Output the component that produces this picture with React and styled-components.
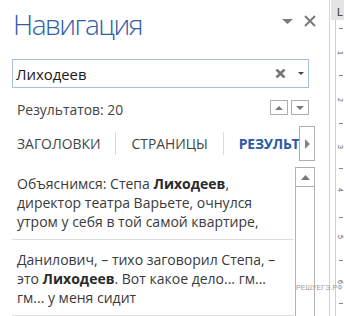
import React from "react";
import styled, { createGlobalStyle } from "styled-components";

const Global = createGlobalStyle`
  html, body { margin: 0; padding: 0; background: #ffffff; }
  body { width: 344px; height: 316px; overflow: hidden; font-family: "Open Sans", "Noto Sans", sans-serif; }
  #root { width: 344px; height: 316px; }
`;

const Page = styled.div`
  position: relative;
  display: flex;
  width: 344px;
  height: 316px;
  overflow: hidden;
  background: #fff;
`;

const Panel = styled.div`
  width: 317px;
  padding-left: 12px;
  height: 316px;
  border-right: 1px solid #d4d4d4;
  display: flex;
  flex-direction: column;
  overflow: hidden;
`;

const Header = styled.div`
  height: 55px;
  padding-top: 4px;
  width: 304px;
  display: flex;
  justify-content: space-between;
  align-items: flex-start;
`;

const Title = styled.h1`
  margin: 0 0 0 1px;
  font-family: "Open Sans", sans-serif;
  font-weight: 300;
  font-size: 28px;
  letter-spacing: -1.5px;
  line-height: 41px;
  color: #2e5ea8;
`;

const HeaderButtons = styled.div`
  display: flex;
  align-items: center;
  gap: 11px;
  margin-top: 11px;
`;

const SearchBox = styled.div`
  height: 27px;
  border: 1px solid #a6bde2;
  display: flex;
  align-items: center;
  padding: 0 4px 0 3px;
  box-sizing: content-box;
  width: 288px;
`;

const SearchText = styled.span`
  flex: 1;
  font-size: 14.9px;
  color: #1a1a1a;
`;

const ClearIcon = styled.svg`
  margin-right: 12px;
`;

const ResultsRow = styled.div`
  height: 25px;
  margin-top: 8px;
  width: 297px;
  display: flex;
  align-items: center;
  justify-content: space-between;
`;

const Count = styled.span`
  margin-left: 5px;
  font-size: 13.9px;
  color: #444;
  padding-top: 2px;
`;

const NavButtons = styled.div`
  display: flex;
  gap: 3px;
  margin-top: -2px;
`;

const NavBtn = styled.div`
  width: 16px;
  height: 13px;
  border: 1px solid #adadad;
  display: flex;
  align-items: center;
  justify-content: center;
  background: #fff;
`;

const TabsRow = styled.div`
  margin-top: 5px;
  height: 35px;
  width: 303px;
  display: flex;
  align-items: stretch;
`;

const TabStrip = styled.div`
  flex: 1;
  display: flex;
  align-items: center;
  overflow: hidden;
  white-space: nowrap;
`;

const Tab = styled.div`
  flex: none;
  padding-left: ${(p) => (p.$first ? "5px" : "15px")};
  padding-right: 15px;
  font-size: 13.9px;
  font-weight: ${(p) => (p.$active ? 700 : 400)};
  color: ${(p) => (p.$active ? "#2b5aa5" : "#454545")};
  letter-spacing: ${(p) => (p.$active ? "-0.2px" : "0")};
`;

const Sep = styled.div`
  flex: none;
  width: 1px;
  height: 23px;
  background: #dcdcdc;
`;

const TabScroll = styled.div`
  flex: none;
  width: 14px;
  border: 1px solid #adadad;
  display: flex;
  align-items: center;
  justify-content: center;
  background: #fff;
`;

const ResultsArea = styled.div`
  flex: 1;
  display: flex;
  width: 303px;
  margin-top: 3px;
  min-height: 0;
`;

const List = styled.div`
  width: 282px;
  flex: none;
`;

const Item = styled.div`
  padding: 10px 0 8px 5px;
  border-bottom: 1px solid #dedede;
  font-size: 14px;
  line-height: 19px;
  color: #3a3a3a;
  white-space: nowrap;
  b { font-weight: 700; color: #2a2a2a; }
`;

const Scrollbar = styled.div`
  flex: none;
  margin-left: 1px;
  margin-top: 3px;
  width: 18px;
  border-left: 1px solid #b4b4b4;
  border-right: 1px solid #b4b4b4;
  display: flex;
  flex-direction: column;
`;

const ScrollUp = styled.div`
  height: 18px;
  border-top: 1px solid #adadad;
  border-bottom: 1px solid #adadad;
  display: flex;
  align-items: center;
  justify-content: center;
`;

const RulerStrip = styled.div`
  flex: 1;
  display: flex;
  flex-direction: column;
`;

const RulerCorner = styled.div`
  height: 25px;
  margin-left: 1px;
  background: #e4e4e4;
  font-family: "Liberation Sans", sans-serif;
  font-size: 11px;
  color: #333;
  padding: 6px 0 0 6px;
  box-sizing: border-box;
`;

const RulerBody = styled.div`
  flex: 1;
  display: flex;
`;

const RulerGap = styled.div`
  width: 5px;
  flex: none;
`;

const Ruler = styled.div`
  flex: 1;
  border-left: 1px solid #cfcfcf;
  background: #fff;
  overflow: hidden;
`;

const Watermark = styled.div`
  position: absolute;
  left: 296px;
  top: 284px;
  font-family: "Liberation Sans", sans-serif;
  font-size: 7px;
  letter-spacing: 0.1px;
  color: #9a9a9a;
  white-space: nowrap;
`;

const Tri = ({ dir = "down", w = 10, h = 5, color = "#777" }) => {
  const pts = {
    down: `0,0 ${w},0 ${w / 2},${h}`,
    up: `0,${h} ${w},${h} ${w / 2},0`,
    right: `0,0 ${w},${h / 2} 0,${h}`,
  }[dir];
  return (
    <svg width={w} height={h} viewBox={`0 0 ${w} ${h}`}>
      <polygon points={pts} fill={color} />
    </svg>
  );
};

export default function App() {
  const ticks = [33, 80, 128, 173, 222, 265, 308];
  const nums = [
    [58, "1"],
    [105, "2"],
    [152, "3"],
    [195, "4"],
    [242, "5"],
    [287, "6"],
  ];
  return (
    <>
      <Global />
      <Page>
        <Panel>
          <Header>
            <Title>Навигация</Title>
            <HeaderButtons>
              <Tri dir="down" w={11} h={5} color="#7a7a7a" />
              <svg width="12" height="12" viewBox="0 0 12 12">
                <path d="M1 1 L11 11 M11 1 L1 11" stroke="#7a7a7a" strokeWidth="2" />
              </svg>
            </HeaderButtons>
          </Header>
          <SearchBox>
            <SearchText>Лиходеев</SearchText>
            <ClearIcon width="11" height="9" viewBox="0 0 11 9">
              <path d="M1.5 0.5 L9.5 8.5 M9.5 0.5 L1.5 8.5" stroke="#777" strokeWidth="2.6" />
            </ClearIcon>
            <Tri dir="down" w={6} h={3} color="#444" />
          </SearchBox>
          <ResultsRow>
            <Count>Результатов: 20</Count>
            <NavButtons>
              <NavBtn>
                <Tri dir="up" w={8} h={4} color="#7a7a7a" />
              </NavBtn>
              <NavBtn>
                <Tri dir="down" w={8} h={4} color="#7a7a7a" />
              </NavBtn>
            </NavButtons>
          </ResultsRow>
          <TabsRow>
            <TabStrip>
              <Tab $first>ЗАГОЛОВКИ</Tab>
              <Sep />
              <Tab>СТРАНИЦЫ</Tab>
              <Sep />
              <Tab $active>РЕЗУЛЬТАТЫ</Tab>
            </TabStrip>
            <TabScroll>
              <Tri dir="right" w={5} h={10} color="#858585" />
            </TabScroll>
          </TabsRow>
          <ResultsArea>
            <List>
              <Item>
                Объяснимся: Степа <b>Лиходеев</b>,<br />
                директор театра Варьете, очнулся<br />
                утром у себя в той самой квартире,
              </Item>
              <Item>
                Данилович, – тихо заговорил Степа, –<br />
                это <b>Лиходеев</b>. Вот какое дело... гм...<br />
                гм... у меня сидит
              </Item>
            </List>
            <Scrollbar>
              <ScrollUp>
                <Tri dir="up" w={9} h={5} color="#777" />
              </ScrollUp>
            </Scrollbar>
          </ResultsArea>
        </Panel>
        <RulerStrip>
          <RulerCorner>L</RulerCorner>
          <RulerBody>
            <RulerGap />
            <Ruler>
              <svg width="8" height="291" viewBox="0 0 8 291">
                {ticks.map((m, i) => (
                  <rect key={i} x="3" y={m - 25} width="4" height="1" fill="#888" />
                ))}
                {nums.map(([m, n]) => (
                  <text
                    key={n}
                    x="0"
                    y="0"
                    transform={`translate(1.5 ${m - 25}) rotate(90)`}
                    fontSize="7"
                    fontFamily="Liberation Sans, sans-serif"
                    fill="#555"
                    textAnchor="middle"
                  >
                    {n}
                  </text>
                ))}
              </svg>
            </Ruler>
          </RulerBody>
        </RulerStrip>
        <Watermark>РЕШУЕГЭ.РФ</Watermark>
      </Page>
    </>
  );
}
